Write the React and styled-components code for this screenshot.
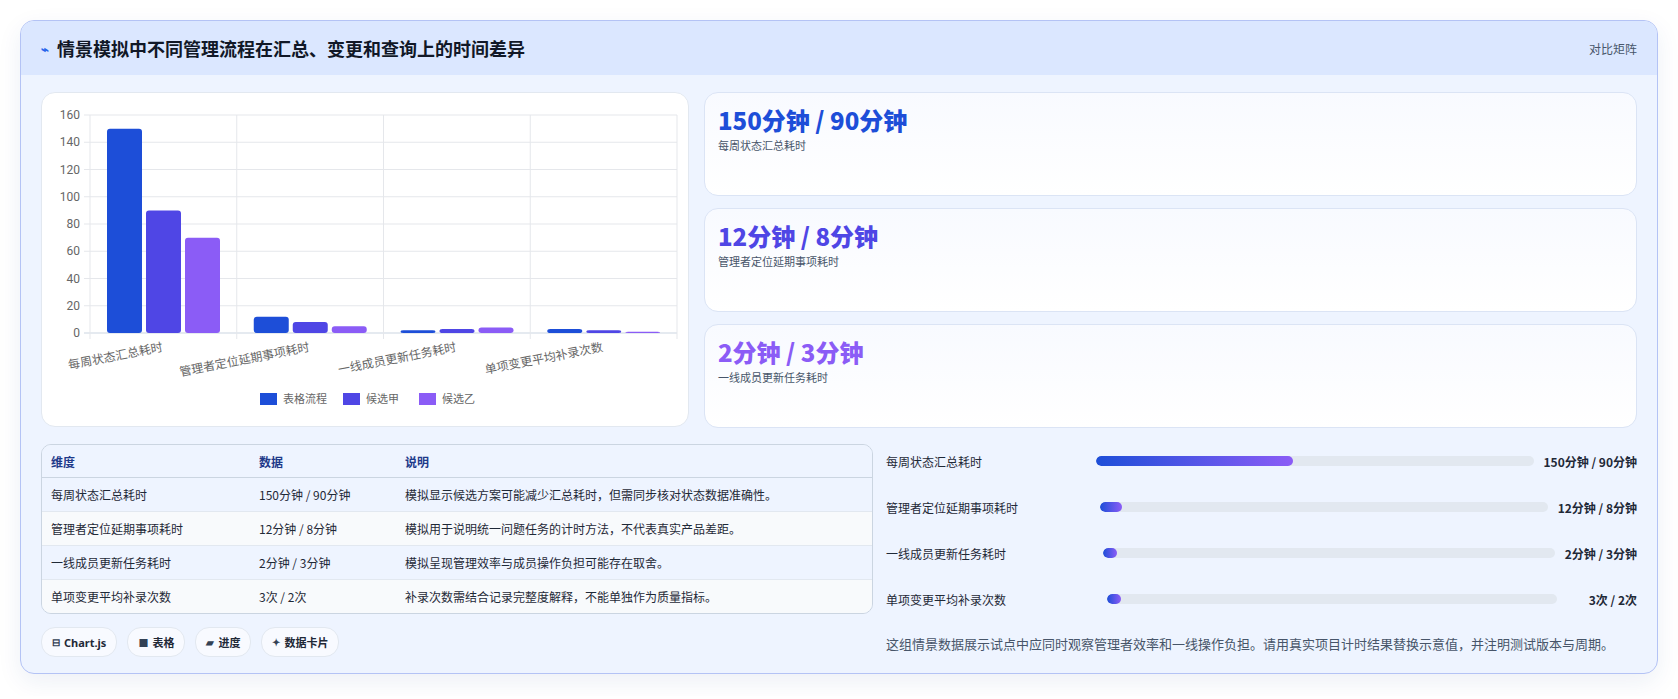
import React from 'react';
import styled, { createGlobalStyle } from 'styled-components';

const GlobalStyle = createGlobalStyle`
  body {
    margin: 0;
    background: #ffffff;
    font-family: 'Noto Sans CJK SC', 'Noto Sans', sans-serif;
  }
`;

const Page = styled.div`
  padding: 20px 20px 22px 20px;
`;

const Panel = styled.section`
  border: 1px solid #b4c3f5;
  border-radius: 14px;
  background: #eef4ff;
  box-shadow: 0 8px 24px rgba(30, 58, 138, 0.08);
  overflow: hidden;
`;

const Header = styled.header`
  height: 54px;
  background: #dbe7ff;
  display: flex;
  align-items: center;
  justify-content: space-between;
  padding: 0 20px 0 20px;
`;

const Title = styled.h2`
  margin: 0;
  font-size: 18px;
  font-weight: 700;
  color: #111827;
  display: flex;
  align-items: center;
  gap: 8px;
`;

const TitleIcon = styled.span`
  color: #2563eb;
  font-size: 13px;
`;

const HeaderTag = styled.span`
  font-size: 12px;
  color: #475569;
`;

const Body = styled.div`
  padding: 17px 20px 16px 20px;
  display: flex;
  flex-direction: column;
  gap: 16px;
`;

const TopRow = styled.div`
  display: grid;
  grid-template-columns: 648px 1fr;
  gap: 15px;
`;

const BottomRow = styled.div`
  display: grid;
  grid-template-columns: 832px 1fr;
  gap: 13px;
`;

const ChartCard = styled.div`
  background: #ffffff;
  border: 1px solid #e2e8f0;
  border-radius: 14px;
  height: 335px;
  box-sizing: border-box;
`;

const StatList = styled.div`
  display: flex;
  flex-direction: column;
  gap: 12px;
`;

const StatCard = styled.div`
  height: 104px;
  box-sizing: border-box;
  background: linear-gradient(180deg, #f8faff, #ffffff);
  border: 1px solid #dbe4f5;
  border-radius: 14px;
  padding: 10px 13px;
`;

const StatValue = styled.div`
  font-size: 24px;
  font-weight: 800;
  color: ${(p) => p.color};
  line-height: 34px;
`;

const StatLabel = styled.div`
  font-size: 11px;
  color: #475569;
`;

const LeftCol = styled.div`
  display: flex;
  flex-direction: column;
  gap: 13px;
`;

const Table = styled.table`
  width: 100%;
  border-collapse: separate;
  border-spacing: 0;
  border: 1px solid #cbd5e1;
  border-radius: 10px;
  overflow: hidden;
  font-size: 12px;
`;

const Th = styled.th`
  text-align: left;
  font-weight: 700;
  color: #1e3a8a;
  background: #eef4ff;
  height: 32px;
  padding: 0 9px;
  border-bottom: 1px solid #cbd5e1;
  width: ${(p) => p.w || 'auto'};
`;

const Tr = styled.tr`
  background: ${(p) => (p.alt ? '#f8fafc' : '#eef4ff')};
`;

const Td = styled.td`
  height: 33px;
  padding: 0 9px;
  color: #1f2937;
  border-bottom: ${(p) => (p.last ? 'none' : '1px solid #e2e8f0')};
`;

const Chips = styled.div`
  display: flex;
  gap: 10px;
`;

const Chip = styled.span`
  height: 28px;
  padding: 0 10px;
  display: inline-flex;
  align-items: center;
  gap: 4px;
  border-radius: 14px;
  background: #f8faff;
  border: 1px solid #e2e8f0;
  font-size: 11px;
  font-weight: 700;
  color: #1f2937;
  font-family: 'Noto Sans', 'Noto Sans CJK SC', sans-serif;
`;

const ChipIcon = styled.span`
  font-size: 10px;
  color: #334155;
`;

const BarsCol = styled.div`
  display: flex;
  flex-direction: column;
`;

const BarRow = styled.div`
  display: flex;
  align-items: center;
  height: 46px;
  gap: 10px;
  &:first-child {
    margin-top: -6px;
  }
`;

const BarLabel = styled.span`
  width: ${(p) => p.w}px;
  font-size: 12px;
  color: #1f2937;
  flex-shrink: 0;
`;

const Track = styled.div`
  flex: 1;
  height: 10px;
  border-radius: 5px;
  background: #e2e8f0;
  overflow: hidden;
`;

const Fill = styled.div`
  height: 100%;
  border-radius: 5px;
  background: linear-gradient(90deg, #1d4ed8, #8b5cf6);
`;

const BarValue = styled.span`
  font-size: 12px;
  font-weight: 700;
  color: #1f2937;
  white-space: nowrap;
  min-width: 70px;
  text-align: right;
`;

const Note = styled.p`
  margin: 12px 0 0 0;
  font-size: 13px;
  color: #475569;
`;

const COLORS = ['#1d4ed8', '#4f46e5', '#8b5cf6'];
const SERIES = ['表格流程', '候选甲', '候选乙'];
const CATS = [
  { name: '每周状态汇总耗时', v: [150, 90, 70] },
  { name: '管理者定位延期事项耗时', v: [12, 8, 5] },
  { name: '一线成员更新任务耗时', v: [2, 3, 4] },
  { name: '单项变更平均补录次数', v: [3, 2, 1] },
];

const BarChart = () => {
  const x0 = 48, x1 = 635, y0 = 22, y1 = 240;
  const cw = (x1 - x0) / 4;
  const sy = (v) => y1 - (v / 160) * (y1 - y0);
  const ticks = [0, 20, 40, 60, 80, 100, 120, 140, 160];
  return (
    <svg width="646" height="333" fontFamily="'Noto Sans CJK SC', sans-serif">
      {ticks.map((t) => (
        <g key={t}>
          <line x1={x0 - 6} x2={x1} y1={sy(t)} y2={sy(t)} stroke={t === 0 ? '#cbd5e1' : '#e5e7eb'} />
          <text x={x0 - 10} y={sy(t) + 4} fontSize="12" fill="#666" textAnchor="end" fontFamily="Roboto, sans-serif">{t}</text>
        </g>
      ))}
      {[0, 1, 2, 3, 4].map((i) => (
        <line key={i} x1={x0 + i * cw} x2={x0 + i * cw} y1={y0} y2={y1 + 6} stroke="#e5e7eb" />
      ))}
      {CATS.map((c, i) => (
        <g key={c.name}>
          {c.v.map((v, j) => (
            <rect key={j} x={x0 + i * cw + 17 + j * 39} y={sy(v)} width="35" height={y1 - sy(v)} rx="3" fill={COLORS[j]} />
          ))}
          <text
            transform={`translate(${x0 + i * cw + cw / 2},${y1 + 18}) rotate(-11)`}
            textAnchor="end"
            fontSize="12"
            fill="#666"
          >
            {c.name}
          </text>
        </g>
      ))}
      <g transform="translate(218,300)">
        {SERIES.map((s, i) => {
          const off = [0, 83, 159][i];
          return (
            <g key={s} transform={`translate(${off},0)`}>
              <rect width="17" height="12" fill={COLORS[i]} />
              <text x="23" y="10" fontSize="11" fill="#666">{s}</text>
            </g>
          );
        })}
      </g>
    </svg>
  );
};

const STATS = [
  { value: '150分钟 / 90分钟', label: '每周状态汇总耗时', color: '#1d4ed8' },
  { value: '12分钟 / 8分钟', label: '管理者定位延期事项耗时', color: '#4f46e5' },
  { value: '2分钟 / 3分钟', label: '一线成员更新任务耗时', color: '#8b5cf6' },
];

const ROWS = [
  ['每周状态汇总耗时', '150分钟 / 90分钟', '模拟显示候选方案可能减少汇总耗时，但需同步核对状态数据准确性。'],
  ['管理者定位延期事项耗时', '12分钟 / 8分钟', '模拟用于说明统一问题任务的计时方法，不代表真实产品差距。'],
  ['一线成员更新任务耗时', '2分钟 / 3分钟', '模拟呈现管理效率与成员操作负担可能存在取舍。'],
  ['单项变更平均补录次数', '3次 / 2次', '补录次数需结合记录完整度解释，不能单独作为质量指标。'],
];

const BARS = [
  { label: '每周状态汇总耗时', value: '150分钟 / 90分钟', pct: 45, w: 200 },
  { label: '管理者定位延期事项耗时', value: '12分钟 / 8分钟', pct: 5, w: 204 },
  { label: '一线成员更新任务耗时', value: '2分钟 / 3分钟', pct: 3, w: 207 },
  { label: '单项变更平均补录次数', value: '3次 / 2次', pct: 3, w: 211 },
];

export default function App() {
  return (
    <Page>
      <GlobalStyle />
      <Panel>
        <Header>
          <Title>
            <TitleIcon>⌁</TitleIcon>
            情景模拟中不同管理流程在汇总、变更和查询上的时间差异
          </Title>
          <HeaderTag>对比矩阵</HeaderTag>
        </Header>
        <Body>
          <TopRow>
            <ChartCard>
              <BarChart />
            </ChartCard>
            <StatList>
              {STATS.map((s) => (
                <StatCard key={s.label}>
                  <StatValue color={s.color}>{s.value}</StatValue>
                  <StatLabel>{s.label}</StatLabel>
                </StatCard>
              ))}
            </StatList>
          </TopRow>
          <BottomRow>
            <LeftCol>
              <Table>
                <thead>
                  <tr>
                    <Th w="190px">维度</Th>
                    <Th w="128px">数据</Th>
                    <Th>说明</Th>
                  </tr>
                </thead>
                <tbody>
                  {ROWS.map((r, i) => (
                    <Tr key={r[0]} alt={i % 2 === 1}>
                      {r.map((c) => (
                        <Td key={c} last={i === ROWS.length - 1}>{c}</Td>
                      ))}
                    </Tr>
                  ))}
                </tbody>
              </Table>
              <Chips>
                <Chip><ChipIcon>⊟</ChipIcon>Chart.js</Chip>
                <Chip><ChipIcon>■</ChipIcon>表格</Chip>
                <Chip><ChipIcon>▰</ChipIcon>进度</Chip>
                <Chip><ChipIcon>✦</ChipIcon>数据卡片</Chip>
              </Chips>
            </LeftCol>
            <BarsCol>
              {BARS.map((b) => (
                <BarRow key={b.label}>
                  <BarLabel w={b.w}>{b.label}</BarLabel>
                  <Track>
                    <Fill style={{ width: `${b.pct}%` }} />
                  </Track>
                  <BarValue>{b.value}</BarValue>
                </BarRow>
              ))}
              <Note>这组情景数据展示试点中应同时观察管理者效率和一线操作负担。请用真实项目计时结果替换示意值，并注明测试版本与周期。</Note>
            </BarsCol>
          </BottomRow>
        </Body>
      </Panel>
    </Page>
  );
}
